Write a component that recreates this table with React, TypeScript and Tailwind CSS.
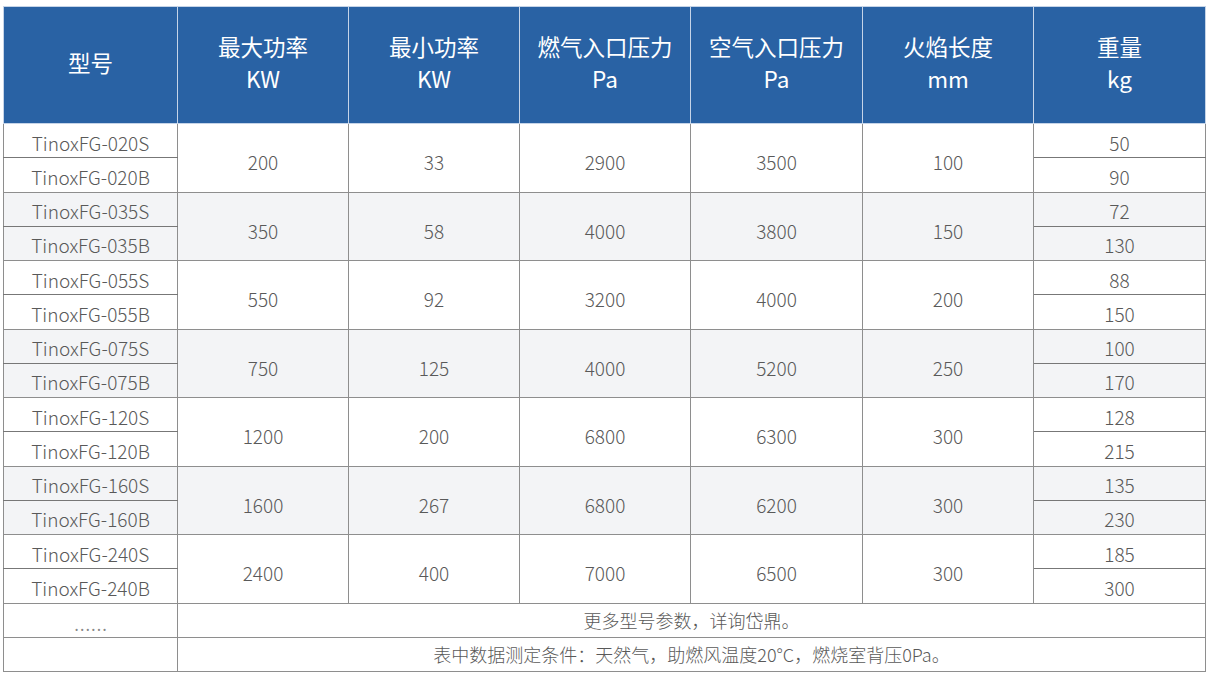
const HEADERS: [string, string?][] = [
  ['型号'],
  ['最大功率', 'KW'],
  ['最小功率', 'KW'],
  ['燃气入口压力', 'Pa'],
  ['空气入口压力', 'Pa'],
  ['火焰长度', 'mm'],
  ['重量', 'kg'],
]

const WIDTHS = [174, 171, 171, 171, 172, 171, 172]

type Row = {
  code: string
  max: number
  min: number
  gas: number
  air: number
  flame: number
  weights: [number, number]
}

const ROWS: Row[] = [
  { code: '020', max: 200, min: 33, gas: 2900, air: 3500, flame: 100, weights: [50, 90] },
  { code: '035', max: 350, min: 58, gas: 4000, air: 3800, flame: 150, weights: [72, 130] },
  { code: '055', max: 550, min: 92, gas: 3200, air: 4000, flame: 200, weights: [88, 150] },
  { code: '075', max: 750, min: 125, gas: 4000, air: 5200, flame: 250, weights: [100, 170] },
  { code: '120', max: 1200, min: 200, gas: 6800, air: 6300, flame: 300, weights: [128, 215] },
  { code: '160', max: 1600, min: 267, gas: 6800, air: 6200, flame: 300, weights: [135, 230] },
  { code: '240', max: 2400, min: 400, gas: 7000, air: 6500, flame: 300, weights: [185, 300] },
]

const cell = 'border border-[#8e8e8e] text-center align-middle p-0'
const merged = `${cell} pt-[8px]`
const sub = `${cell} pt-[3px]`

export default function App() {
  return (
    <div
      className="min-h-screen bg-white pt-[6px] pl-[3px] text-[#595959]"
      style={{ fontFamily: '"Noto Sans CJK SC", "Noto Sans", sans-serif' }}
    >
      <table className="table-fixed border-collapse w-[1202px] text-[19px] font-light leading-none">
        <colgroup>
          {WIDTHS.map((w, i) => (
            <col key={i} style={{ width: w }} />
          ))}
        </colgroup>
        <thead>
          <tr className="h-[117px] bg-[#2962a4] text-white text-[22.5px]">
            {HEADERS.map(([a, b]) => (
              <th key={a} className="border border-[#c5d4e8] text-center align-middle font-normal leading-[32px] p-0 pb-[6px]">
                <div>{a}</div>
                {b && <div>{b}</div>}
              </th>
            ))}
          </tr>
        </thead>
        <tbody>
          {ROWS.map((r, i) => {
            const bg = i % 2 === 1 ? 'bg-[#f3f4f6]' : 'bg-white'
            return [
              <tr key={r.code + 'S'} className={`h-[34.25px] ${bg}`}>
                <td className={`${sub} border-b-[#777]`}>TinoxFG-{r.code}S</td>
                <td rowSpan={2} className={merged}>{r.max}</td>
                <td rowSpan={2} className={merged}>{r.min}</td>
                <td rowSpan={2} className={merged}>{r.gas}</td>
                <td rowSpan={2} className={merged}>{r.air}</td>
                <td rowSpan={2} className={merged}>{r.flame}</td>
                <td className={`${sub} border-b-[#777]`}>{r.weights[0]}</td>
              </tr>,
              <tr key={r.code + 'B'} className={`h-[34.25px] ${bg}`}>
                <td className={sub}>TinoxFG-{r.code}B</td>
                <td className={sub}>{r.weights[1]}</td>
              </tr>,
            ]
          })}
          <tr className="h-[34px] text-[18px]">
            <td className={`${cell} pt-[4px]`}>
              <span className="text-[23px] text-[#888]" style={{ fontFamily: '"Noto Sans", sans-serif' }}>
                ……
              </span>
            </td>
            <td colSpan={6} className={cell}>更多型号参数，详询岱鼎。</td>
          </tr>
          <tr className="h-[34px] text-[18px]">
            <td className={cell}></td>
            <td colSpan={6} className={cell}>表中数据测定条件：天然气，助燃风温度20°C，燃烧室背压0Pa。</td>
          </tr>
        </tbody>
      </table>
    </div>
  )
}
